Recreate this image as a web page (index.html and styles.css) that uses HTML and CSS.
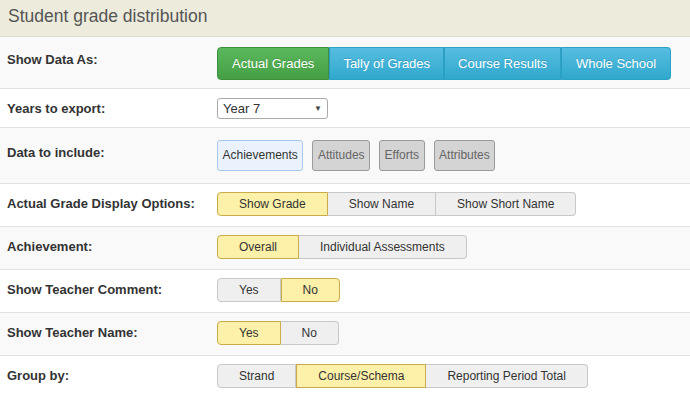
FILE: index.html
```html
<!DOCTYPE html>
<html>
<head>
<meta charset="utf-8">
<link rel="stylesheet" href="styles.css">
</head>
<body>
<div class="header">Student grade distribution</div>
<div class="row r1 alt">
  <div class="label">Show Data As:</div>
  <div class="btn-group">
    <span class="btn green">Actual Grades</span><span class="btn blue">Tally of Grades</span><span class="btn blue">Course Results</span><span class="btn blue">Whole School</span>
  </div>
</div>
<div class="row r2">
  <div class="label">Years to export:</div>
  <div class="select"><span>Year 7</span><span class="arrow">▼</span></div>
</div>
<div class="row r3 alt">
  <div class="label">Data to include:</div>
  <div class="chips">
    <span class="chip on">Achievements</span><span class="chip">Attitudes</span><span class="chip">Efforts</span><span class="chip">Attributes</span>
  </div>
</div>
<div class="row rt">
  <div class="label">Actual Grade Display Options:</div>
  <div class="toggle"><span class="sel">Show Grade</span><span>Show Name</span><span>Show Short Name</span></div>
</div>
<div class="row rt alt">
  <div class="label">Achievement:</div>
  <div class="toggle"><span class="sel">Overall</span><span>Individual Assessments</span></div>
</div>
<div class="row rt">
  <div class="label">Show Teacher Comment:</div>
  <div class="toggle"><span>Yes</span><span class="sel">No</span></div>
</div>
<div class="row rt alt">
  <div class="label">Show Teacher Name:</div>
  <div class="toggle"><span class="sel">Yes</span><span>No</span></div>
</div>
<div class="row rt last">
  <div class="label">Group by:</div>
  <div class="toggle"><span>Strand</span><span class="sel">Course/Schema</span><span>Reporting Period Total</span></div>
</div>
</body>
</html>
```
FILE: styles.css
```css
html, body {
  margin: 0;
  padding: 0;
  background: #fff;
  font-family: "Liberation Sans", Arial, sans-serif;
  color: #333;
}
.header {
  height: 36px;
  line-height: 32px;
  padding-left: 8px;
  background: #ecebdc;
  border-bottom: 1px solid #dcdcd0;
  font-size: 17.5px;
  color: #555;
}
.row {
  display: flex;
  align-items: flex-start;
  padding-left: 7px;
  border-bottom: 1px solid #e2e2e2;
  background: #fff;
}
.row.alt { background: #f9f9f9; }
.row.last { border-bottom: none; height: 50px; }
.label {
  width: 210px;
  flex: none;
  font-size: 13px;
  font-weight: bold;
  line-height: 20px;
  color: #333;
}
.r1 { padding-top: 10px; padding-bottom: 8px; }
.r1 .label { margin-top: 3px; }
.r2 { padding-top: 9px; padding-bottom: 8px; }
.r2 .label { margin-top: 1px; }
.r3 { padding-top: 12px; padding-bottom: 12px; }
.r3 .label { margin-top: 3px; }
.rt { padding-top: 8px; padding-bottom: 10px; }
.rt .label { line-height: 24px; }

.btn-group { display: flex; }
.btn {
  display: inline-block;
  height: 31px;
  line-height: 31px;
  padding: 0 13px;
  font-size: 13px;
  color: #fff;
  text-shadow: 0 -1px 0 rgba(0,0,0,0.15);
  border: 1px solid #2aa3c7;
}
.btn.green {
  background: linear-gradient(#5cb85c, #45a045);
  border-color: #3e8f3e;
  border-radius: 4px 0 0 4px;
  padding: 0 14px;
}
.btn.blue {
  background: linear-gradient(#56bde0, #30a8cd);
  border-left-color: #2a9cc0;
}
.btn.blue + .btn.blue { border-left: 1px solid #2a9cc0; }
.btn.blue:last-child { border-radius: 0 4px 4px 0; padding: 0 14px; }

.select {
  height: 19px;
  border: 1px solid #aaa;
  border-radius: 3px;
  background: #fff;
  display: flex;
  justify-content: space-between;
  align-items: center;
  font-size: 13px;
  padding-left: 5px;
  padding-right: 5px;
  width: 99px;
  color: #333;
}
.select .arrow { font-size: 8px; color: #444; }

.chips { display: flex; gap: 9px; }
.chip {
  display: inline-block;
  height: 29px;
  line-height: 29px;
  padding: 0 4.5px;
  font-size: 12px;
  color: #666;
  background: #d4d4d4;
  border: 1px solid #9a9a9a;
  border-radius: 3px;
}
.chip.on {
  background: #eaf3fd;
  border-color: #a8c8ea;
  color: #333;
}

.toggle { display: flex; }
.toggle span {
  display: inline-block;
  height: 22px;
  line-height: 23px;
  padding: 0 21px;
  font-size: 12px;
  color: #333;
  background: #efefef;
  border: 1px solid #c8c8c8;
  border-left: none;
}
.toggle span:first-child { border-left: 1px solid #c8c8c8; border-radius: 4px 0 0 4px; }
.toggle span:last-child { border-radius: 0 4px 4px 0; }
.toggle span.sel {
  background: #fdf0a8;
  border-color: #c9ab4c;
  border-left: 1px solid #c9ab4c;
}
.toggle span.sel + span { border-left: none; }
```
